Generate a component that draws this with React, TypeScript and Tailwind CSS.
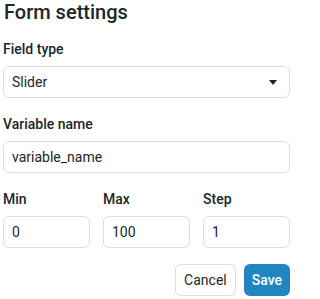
import React from "react";

const inputCls =
  "h-[32px] w-full rounded-[6px] border border-[#dcdcdc] bg-white px-[8px] text-[14px] text-[#212529] outline-none";

function Label({ children }: { children: React.ReactNode }) {
  return <div className="text-[14px] leading-[20px] font-medium text-[#212529]">{children}</div>;
}

export default function App() {
  return (
    <div
      className="w-[294px] h-[299px] bg-white pl-[3px] pr-[4px] text-[#212529]"
      style={{ fontFamily: "Roboto, 'Liberation Sans', sans-serif" }}
    >
      <div className="pl-[1px] text-[20px] leading-[24px] font-medium">Form settings</div>
      <div className="mt-[15px] flex flex-col gap-[7px]">
        <Label>Field type</Label>
        <div className={inputCls + " flex items-center justify-between pr-[12px]"}>
          <span>Slider</span>
          <svg width="8" height="5" viewBox="0 0 8 5">
            <path d="M0 0 H8 L4 5 Z" fill="#222" />
          </svg>
        </div>
      </div>
      <div className="mt-[16px] flex flex-col gap-[7px]">
        <Label>Variable name</Label>
        <input className={inputCls} defaultValue="variable_name" />
      </div>
      <div className="mt-[16px] grid grid-cols-3 gap-x-[13px]">
        {[
          ["Min", "0"],
          ["Max", "100"],
          ["Step", "1"],
        ].map(([l, v]) => (
          <div key={l} className="flex flex-col gap-[7px]">
            <Label>{l}</Label>
            <input className={inputCls} defaultValue={v} />
          </div>
        ))}
      </div>
      <div className="mt-[16px] flex justify-end gap-[8px]">
        <button className="h-[32px] rounded-[6px] border border-[#dcdcdc] bg-white px-[8px] text-[14px] text-[#212529]">
          Cancel
        </button>
        <button className="h-[32px] rounded-[6px] bg-[#1f86c0] px-[8px] text-[14px] font-medium text-white">
          Save
        </button>
      </div>
    </div>
  );
}
